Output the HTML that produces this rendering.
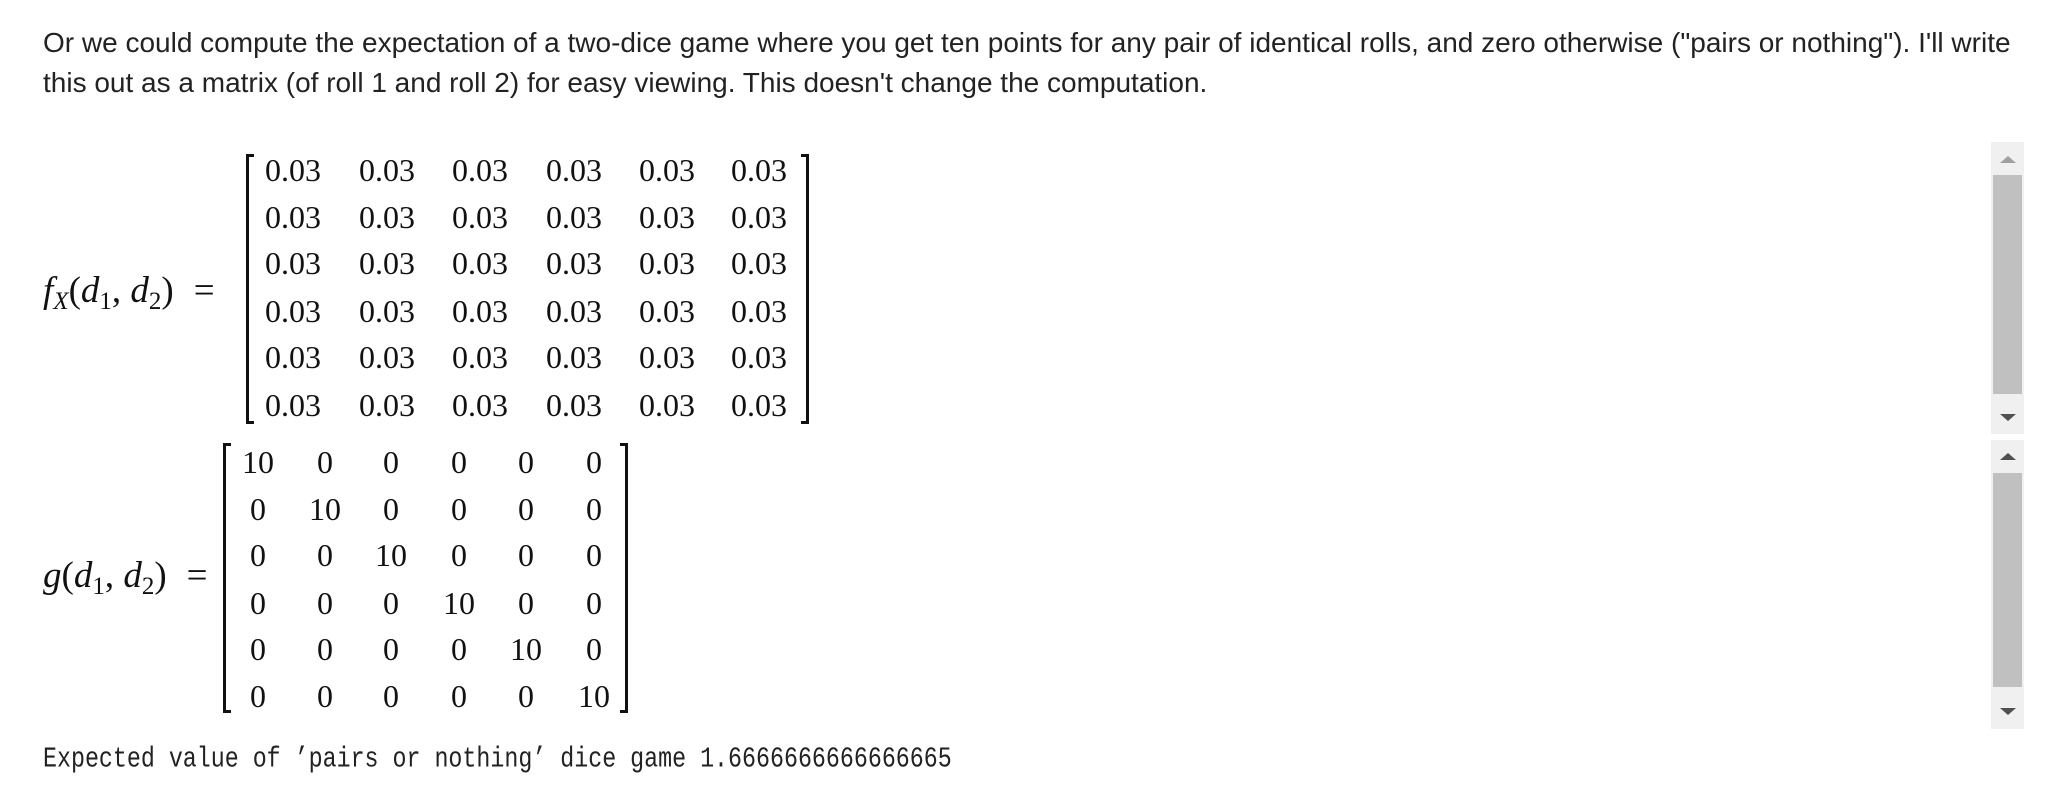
<!DOCTYPE html>
<html><head><meta charset="utf-8"><style>
body{margin:0;width:2060px;height:788px;background:#fff;position:relative;overflow:hidden;font-family:"Liberation Sans",sans-serif;color:#222}
.p{position:absolute;left:43px;font-size:28px;line-height:40px;white-space:nowrap}
.m{position:absolute;font-family:"Liberation Serif",serif;font-size:32px;line-height:32px;color:#111;white-space:nowrap}
.lbl{position:absolute;font-family:"Liberation Serif",serif;font-size:37px;line-height:37px;color:#111;white-space:nowrap}
.lbl .eq{margin-left:20px}
.lb,.rb{position:absolute;border:3px solid #111;width:8px;box-sizing:border-box}
.lb{border-right:none}.rb{border-left:none}
.c{position:absolute;text-align:center;transform:translateX(-50%)}
i{font-style:italic}
sub{font-size:25px;vertical-align:-7px;line-height:0}
.sb{position:absolute;left:1991px;width:33px;background:#f0f0f0}
.th{position:absolute;left:2px;width:29px;background:#c0c0c0}
.up,.dn{position:absolute;left:9px;width:0;height:0;border-left:8px solid transparent;border-right:8px solid transparent}
.up{border-bottom:7px solid #505050}.dn{border-top:7px solid #505050}
</style></head><body>
<div class="p" style="top:23px">Or we could compute the expectation of a two-dice game where you get ten points for any pair of identical rolls, and zero otherwise ("pairs or nothing"). I'll write</div>
<div class="p" style="top:63px">this out as a matrix (of roll 1 and roll 2) for easy viewing. This doesn't change the computation.</div>

<div class="lbl" style="left:43px;top:272px"><i>f</i><sub><i>X</i></sub>(<i>d</i><sub>1</sub>, <i>d</i><sub>2</sub>)<span class="eq">=</span></div>
<div class="lb" style="left:246px;top:154px;height:270px"></div>
<div class="rb" style="left:801px;top:154px;height:270px"></div>

<div class="lbl" style="left:43px;top:557px"><i>g</i>(<i>d</i><sub>1</sub>, <i>d</i><sub>2</sub>)<span class="eq">=</span></div>
<div class="lb" style="left:223px;top:443px;height:270px"></div>
<div class="rb" style="left:620px;top:443px;height:270px"></div>

<div style="position:absolute;left:43px;top:744px;font-family:'Liberation Mono',monospace;font-size:23.3px;line-height:24px;color:#222;white-space:nowrap;transform:scaleY(1.25);transform-origin:0 0">Expected value of ’pairs or nothing’ dice game 1.6666666666666665</div>

<div class="sb" style="top:142px;height:292px"><div class="up" style="top:14px;border-bottom-color:#a0a0a0"></div><div class="th" style="top:33px;height:219px"></div><div class="dn" style="top:272px"></div></div>
<div class="sb" style="top:440px;height:289px"><div class="up" style="top:13px"></div><div class="th" style="top:33px;height:214px"></div><div class="dn" style="top:268px"></div></div>

<div class="m" style="left:0;top:0">
<span class="c" style="left:293px;top:154px">0.03</span><span class="c" style="left:387px;top:154px">0.03</span><span class="c" style="left:480px;top:154px">0.03</span><span class="c" style="left:574px;top:154px">0.03</span><span class="c" style="left:667px;top:154px">0.03</span><span class="c" style="left:759px;top:154px">0.03</span>
<span class="c" style="left:293px;top:201px">0.03</span><span class="c" style="left:387px;top:201px">0.03</span><span class="c" style="left:480px;top:201px">0.03</span><span class="c" style="left:574px;top:201px">0.03</span><span class="c" style="left:667px;top:201px">0.03</span><span class="c" style="left:759px;top:201px">0.03</span>
<span class="c" style="left:293px;top:247px">0.03</span><span class="c" style="left:387px;top:247px">0.03</span><span class="c" style="left:480px;top:247px">0.03</span><span class="c" style="left:574px;top:247px">0.03</span><span class="c" style="left:667px;top:247px">0.03</span><span class="c" style="left:759px;top:247px">0.03</span>
<span class="c" style="left:293px;top:295px">0.03</span><span class="c" style="left:387px;top:295px">0.03</span><span class="c" style="left:480px;top:295px">0.03</span><span class="c" style="left:574px;top:295px">0.03</span><span class="c" style="left:667px;top:295px">0.03</span><span class="c" style="left:759px;top:295px">0.03</span>
<span class="c" style="left:293px;top:341px">0.03</span><span class="c" style="left:387px;top:341px">0.03</span><span class="c" style="left:480px;top:341px">0.03</span><span class="c" style="left:574px;top:341px">0.03</span><span class="c" style="left:667px;top:341px">0.03</span><span class="c" style="left:759px;top:341px">0.03</span>
<span class="c" style="left:293px;top:389px">0.03</span><span class="c" style="left:387px;top:389px">0.03</span><span class="c" style="left:480px;top:389px">0.03</span><span class="c" style="left:574px;top:389px">0.03</span><span class="c" style="left:667px;top:389px">0.03</span><span class="c" style="left:759px;top:389px">0.03</span>

<span class="c" style="left:258px;top:446px">10</span><span class="c" style="left:325px;top:446px">0</span><span class="c" style="left:391px;top:446px">0</span><span class="c" style="left:459px;top:446px">0</span><span class="c" style="left:526px;top:446px">0</span><span class="c" style="left:594px;top:446px">0</span>
<span class="c" style="left:258px;top:493px">0</span><span class="c" style="left:325px;top:493px">10</span><span class="c" style="left:391px;top:493px">0</span><span class="c" style="left:459px;top:493px">0</span><span class="c" style="left:526px;top:493px">0</span><span class="c" style="left:594px;top:493px">0</span>
<span class="c" style="left:258px;top:539px">0</span><span class="c" style="left:325px;top:539px">0</span><span class="c" style="left:391px;top:539px">10</span><span class="c" style="left:459px;top:539px">0</span><span class="c" style="left:526px;top:539px">0</span><span class="c" style="left:594px;top:539px">0</span>
<span class="c" style="left:258px;top:587px">0</span><span class="c" style="left:325px;top:587px">0</span><span class="c" style="left:391px;top:587px">0</span><span class="c" style="left:459px;top:587px">10</span><span class="c" style="left:526px;top:587px">0</span><span class="c" style="left:594px;top:587px">0</span>
<span class="c" style="left:258px;top:633px">0</span><span class="c" style="left:325px;top:633px">0</span><span class="c" style="left:391px;top:633px">0</span><span class="c" style="left:459px;top:633px">0</span><span class="c" style="left:526px;top:633px">10</span><span class="c" style="left:594px;top:633px">0</span>
<span class="c" style="left:258px;top:680px">0</span><span class="c" style="left:325px;top:680px">0</span><span class="c" style="left:391px;top:680px">0</span><span class="c" style="left:459px;top:680px">0</span><span class="c" style="left:526px;top:680px">0</span><span class="c" style="left:594px;top:680px">10</span>
</div>
</body></html>
